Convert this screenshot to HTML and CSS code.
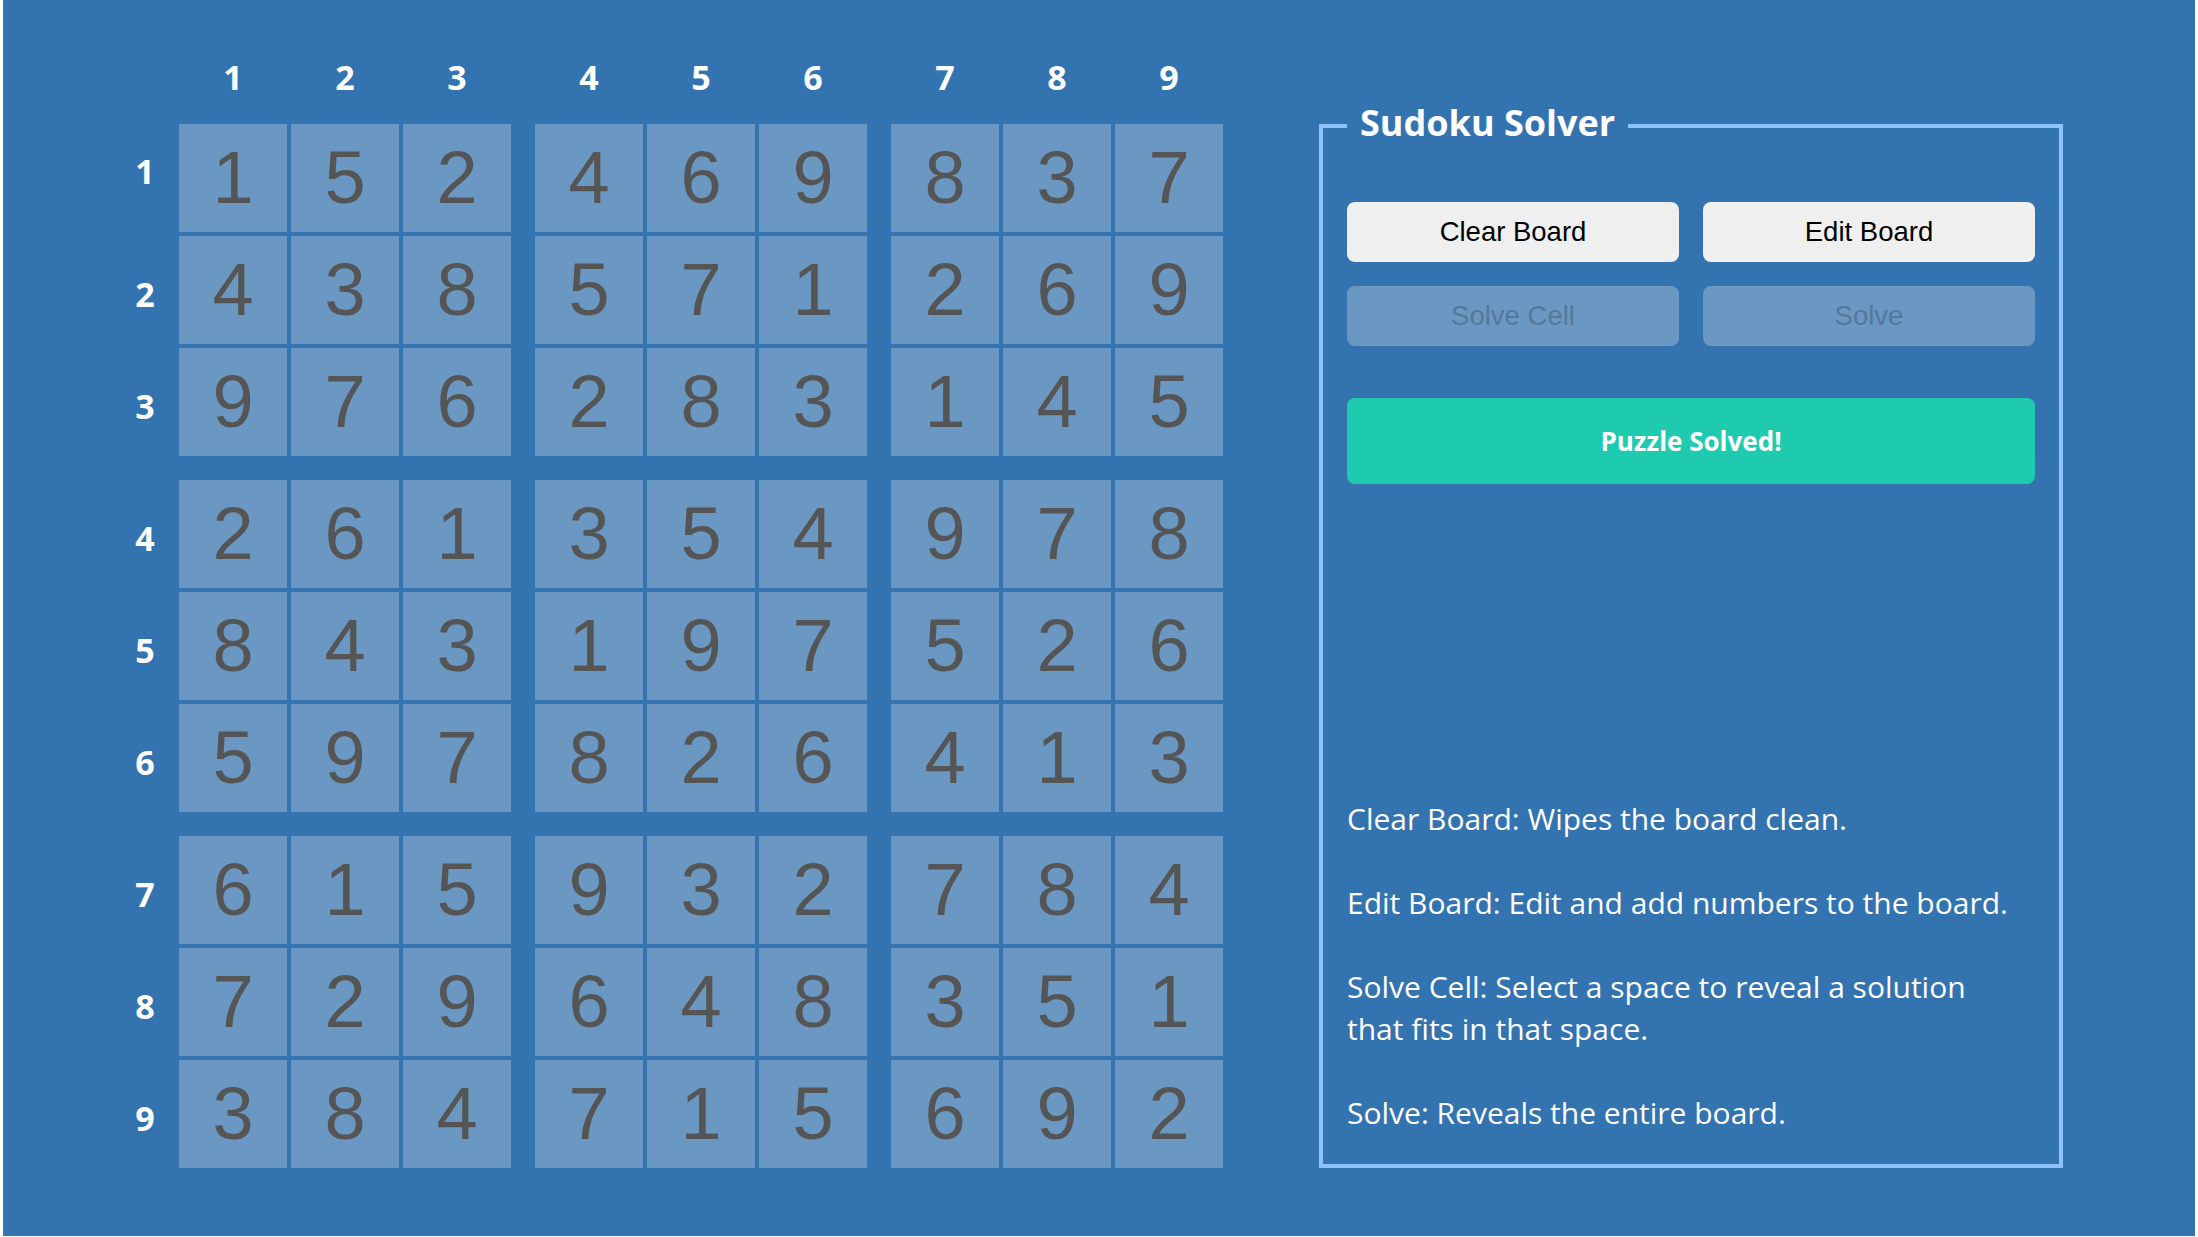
FILE: index.html
```html
<!DOCTYPE html>
<html lang="en">
<head>
<meta charset="utf-8">
<title>Sudoku Solver</title>
<link rel="stylesheet" href="styles.css">
</head>
<body>
<div class="app">
  <div class="board">
    <div class="row head">
      <div class="label"></div>
      <div class="grp"><div class="hd">1</div><div class="hd">2</div><div class="hd">3</div></div>
      <div class="grp"><div class="hd">4</div><div class="hd">5</div><div class="hd">6</div></div>
      <div class="grp"><div class="hd">7</div><div class="hd">8</div><div class="hd">9</div></div>
    </div>
    <div class="band">
      <div class="row">
        <div class="label first">1</div>
        <div class="grp"><div class="cell">1</div><div class="cell">5</div><div class="cell">2</div></div>
        <div class="grp"><div class="cell">4</div><div class="cell">6</div><div class="cell">9</div></div>
        <div class="grp"><div class="cell">8</div><div class="cell">3</div><div class="cell">7</div></div>
      </div>
      <div class="row">
        <div class="label">2</div>
        <div class="grp"><div class="cell">4</div><div class="cell">3</div><div class="cell">8</div></div>
        <div class="grp"><div class="cell">5</div><div class="cell">7</div><div class="cell">1</div></div>
        <div class="grp"><div class="cell">2</div><div class="cell">6</div><div class="cell">9</div></div>
      </div>
      <div class="row">
        <div class="label">3</div>
        <div class="grp"><div class="cell">9</div><div class="cell">7</div><div class="cell">6</div></div>
        <div class="grp"><div class="cell">2</div><div class="cell">8</div><div class="cell">3</div></div>
        <div class="grp"><div class="cell">1</div><div class="cell">4</div><div class="cell">5</div></div>
      </div>
    </div>
    <div class="band">
      <div class="row">
        <div class="label">4</div>
        <div class="grp"><div class="cell">2</div><div class="cell">6</div><div class="cell">1</div></div>
        <div class="grp"><div class="cell">3</div><div class="cell">5</div><div class="cell">4</div></div>
        <div class="grp"><div class="cell">9</div><div class="cell">7</div><div class="cell">8</div></div>
      </div>
      <div class="row">
        <div class="label">5</div>
        <div class="grp"><div class="cell">8</div><div class="cell">4</div><div class="cell">3</div></div>
        <div class="grp"><div class="cell">1</div><div class="cell">9</div><div class="cell">7</div></div>
        <div class="grp"><div class="cell">5</div><div class="cell">2</div><div class="cell">6</div></div>
      </div>
      <div class="row">
        <div class="label">6</div>
        <div class="grp"><div class="cell">5</div><div class="cell">9</div><div class="cell">7</div></div>
        <div class="grp"><div class="cell">8</div><div class="cell">2</div><div class="cell">6</div></div>
        <div class="grp"><div class="cell">4</div><div class="cell">1</div><div class="cell">3</div></div>
      </div>
    </div>
    <div class="band">
      <div class="row">
        <div class="label">7</div>
        <div class="grp"><div class="cell">6</div><div class="cell">1</div><div class="cell">5</div></div>
        <div class="grp"><div class="cell">9</div><div class="cell">3</div><div class="cell">2</div></div>
        <div class="grp"><div class="cell">7</div><div class="cell">8</div><div class="cell">4</div></div>
      </div>
      <div class="row">
        <div class="label">8</div>
        <div class="grp"><div class="cell">7</div><div class="cell">2</div><div class="cell">9</div></div>
        <div class="grp"><div class="cell">6</div><div class="cell">4</div><div class="cell">8</div></div>
        <div class="grp"><div class="cell">3</div><div class="cell">5</div><div class="cell">1</div></div>
      </div>
      <div class="row">
        <div class="label">9</div>
        <div class="grp"><div class="cell">3</div><div class="cell">8</div><div class="cell">4</div></div>
        <div class="grp"><div class="cell">7</div><div class="cell">1</div><div class="cell">5</div></div>
        <div class="grp"><div class="cell">6</div><div class="cell">9</div><div class="cell">2</div></div>
      </div>
    </div>
  </div>

  <fieldset class="panel">
    <legend class="title">Sudoku Solver</legend>
    <div class="buttons">
      <button class="btn">Clear Board</button>
      <button class="btn">Edit Board</button>
      <button class="btn" disabled>Solve Cell</button>
      <button class="btn" disabled>Solve</button>
    </div>
    <div class="status">Puzzle Solved!</div>
    <div class="help">
      <p>Clear Board: Wipes the board clean.</p>
      <p>Edit Board: Edit and add numbers to the board.</p>
      <p>Solve Cell: Select a space to reveal a solution that fits in that space.</p>
      <p>Solve: Reveals the entire board.</p>
    </div>
  </fieldset>
</div>
</body>
</html>
```

FILE: styles.css
```css
html, body {
  margin: 0;
  padding: 0;
  background: #ffffff;
}

.app {
  margin: 0 3px 0 3px;
  height: 1236px;
  background: #3373b0;
  display: flex;
  align-items: flex-start;
  font-family: "Open Sans", "Noto Sans", sans-serif;
  color: #ffffff;
}

.board {
  margin-left: 112px;
  padding-top: 36px;
  display: flex;
  flex-direction: column;
}

.row {
  display: flex;
}

.head {
  height: 84px;
  margin-bottom: 4px;
  padding-bottom: 3px;
  box-sizing: border-box;
}

.label {
  width: 60px;
  margin-right: 4px;
  display: flex;
  align-items: center;
  justify-content: center;
  padding-top: 8px;
  box-sizing: border-box;
  font-weight: 700;
  font-size: 34px;
}

.label.first {
  padding-top: 0;
  padding-bottom: 14px;
}

.grp {
  display: flex;
  gap: 4px;
}

.grp + .grp {
  margin-left: 24px;
}

.hd {
  width: 108px;
  display: flex;
  align-items: center;
  justify-content: center;
  font-weight: 700;
  font-size: 34px;
}

.band {
  display: flex;
  flex-direction: column;
  gap: 4px;
}

.band + .band {
  margin-top: 24px;
}

.cell {
  width: 108px;
  height: 108px;
  box-sizing: border-box;
  padding-bottom: 2px;
  background: #6a98c3;
  color: #555555;
  font-family: "Liberation Sans", Arial, sans-serif;
  font-size: 74px;
  display: flex;
  align-items: center;
  justify-content: center;
}

.panel {
  margin: 99px 0 0 96px;
  width: 744px;
  height: 1069px;
  box-sizing: border-box;
  border: 4px solid #8cc3fb;
  padding: 50px 24px 30px 24px;
  display: flex;
  flex-direction: column;
}

.title {
  margin-left: 0;
  padding: 0 13px 5px 13px;
  font-weight: 700;
  font-size: 36px;
  line-height: 48px;
}

.buttons {
  display: grid;
  grid-template-columns: 1fr 1fr;
  column-gap: 24px;
  row-gap: 24px;
}

.btn {
  height: 60px;
  border: none;
  border-radius: 8px;
  background: #efefef;
  color: #000000;
  font-family: "Liberation Sans", Arial, sans-serif;
  font-size: 27.5px;
  padding: 0;
}

.btn:disabled {
  background: #6a98c3;
  color: #55789a;
}

.status {
  margin-top: 52px;
  height: 86px;
  border-radius: 8px;
  background: #1ecbaf;
  display: flex;
  align-items: center;
  justify-content: center;
  font-weight: 700;
  font-size: 26px;
}

.help {
  margin-top: auto;
  padding-right: 12px;
  font-size: 30px;
  line-height: 42px;
}

.help p {
  margin: 0;
}

.help p + p {
  margin-top: 42px;
}
```
